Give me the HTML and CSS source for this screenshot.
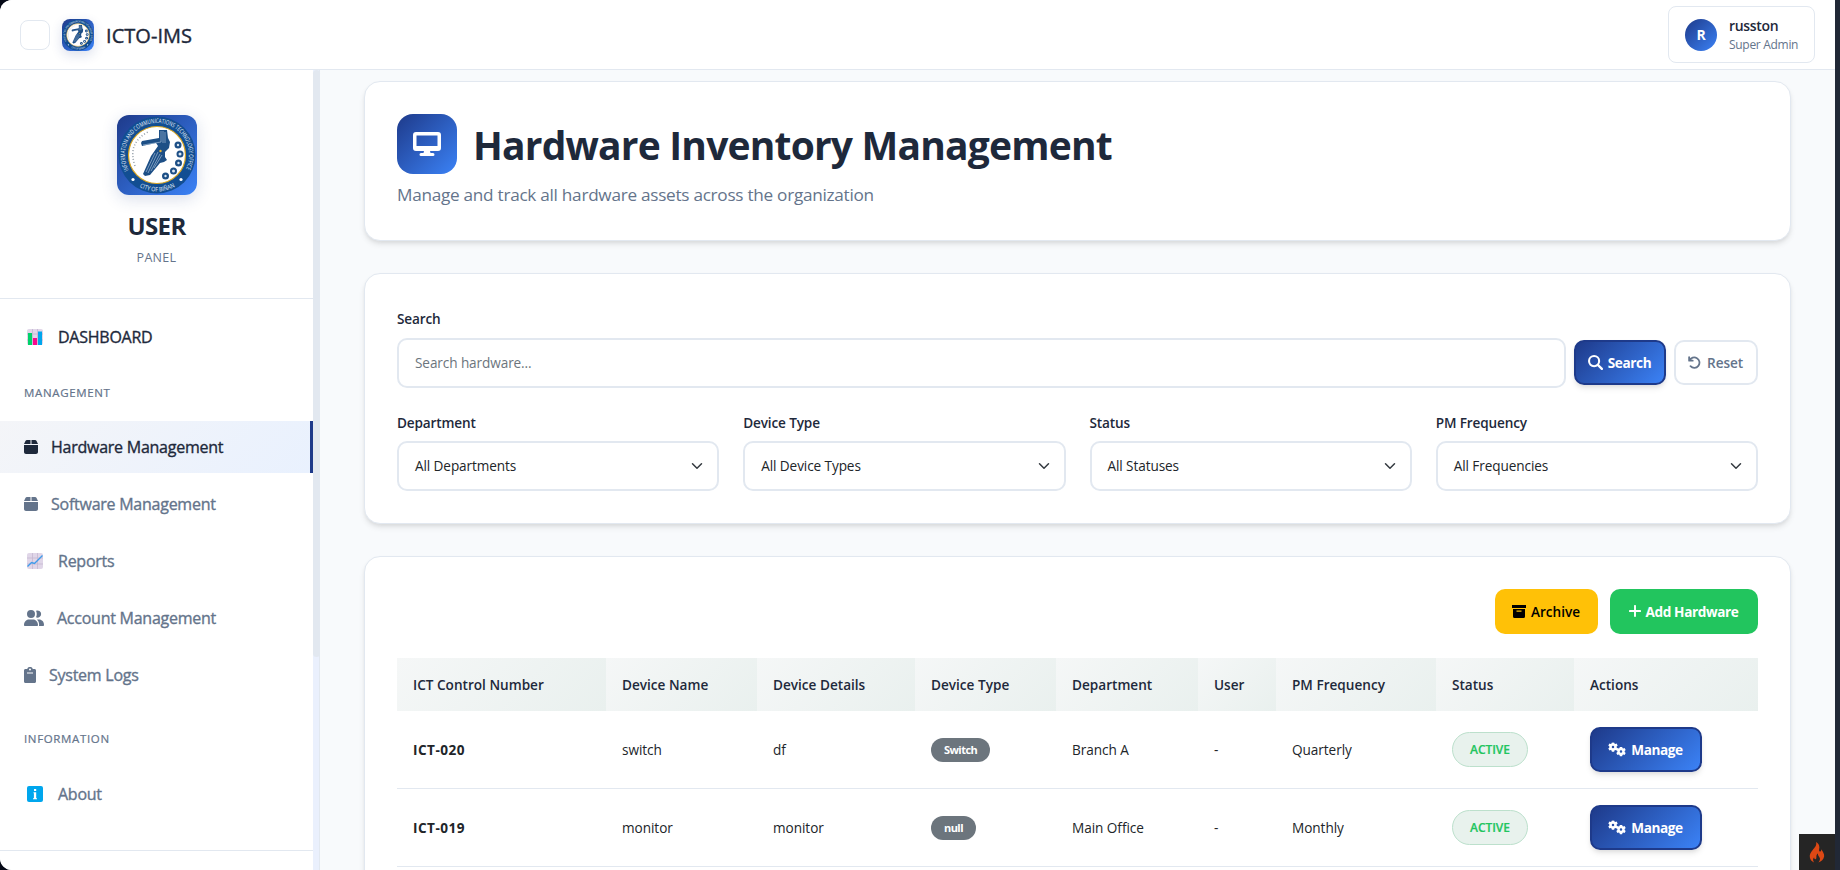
FILE: index.html
```html
<!DOCTYPE html>
<html lang="en">
<head>
<meta charset="utf-8">
<title>Hardware Inventory Management</title>
<link rel="stylesheet" href="styles.css">
</head>
<body>
<svg class="defs" aria-hidden="true">
  <defs>
    <linearGradient id="blue" x1="0" y1="0" x2="1" y2="1"><stop offset="0" stop-color="#1e3a8a"/><stop offset="1" stop-color="#3b82f6"/></linearGradient>
    <path id="arc-top" d="M11.800 55.100A32 32 0 1 1 68.200 55.100"/>
    <path id="arc-bottom" d="M16.300 67.700A36.500 36.500 0 0 0 63.700 67.700"/>
    <symbol id="seal" viewBox="0 0 80 80">
      <rect width="80" height="80" fill="url(#blue)"/>
      <circle cx="40" cy="40" r="38.5" fill="#124e92"/>
      <circle cx="40" cy="40" r="28.5" fill="#fff" stroke="#d9a521" stroke-width="1.200"/>
      <path d="M42 15h8l1 8 2 4-1 6-4 4 0 5 2 3-3 2-4 1-10 12-5 1-2-2 8-18 7-10-2-3-14 3-1-3 1-2 17-3z" fill="#1d4f86"/>
      <path d="M44 16v11M46 16v12M48 17v11M26 30l18-3M38 38L29 57M41 37L31 58M43 39l-9 17M45 40l-8 13" stroke="#b9cde2" stroke-width=".6" fill="none"/>
      <g fill="#1d4f86"><circle cx="61" cy="30" r="3.500"/><circle cx="63" cy="39" r="3.500"/><circle cx="61.500" cy="48" r="3.500"/><circle cx="56.500" cy="56" r="3.500"/><circle cx="48.500" cy="61" r="3.500"/></g>
      <g fill="#dbe7f3"><circle cx="61" cy="30" r="1.200"/><circle cx="63" cy="39" r="1.500"/><circle cx="61.500" cy="48" r="1.200"/><circle cx="56.500" cy="56" r="1.500"/><circle cx="48.500" cy="61" r="1.200"/></g>
      <path d="M18 51Q10 28 31 17" fill="none" stroke="#9aa3ad" stroke-width="1.600" stroke-dasharray="1 2"/>
      <circle cx="43.500" cy="36" r="1.200" fill="#e5b53a"/>
      <circle cx="16" cy="64.500" r="1.600" fill="#fff"/><circle cx="64" cy="64.500" r="1.600" fill="#fff"/>
      <g fill="#e6f0fa" font-family="Open Sans, sans-serif" font-size="6.200">
        <text textLength="130" lengthAdjust="spacingAndGlyphs"><textPath href="#arc-top">INFORMATION AND COMMUNICATIONS TECHNOLOGY OFFICE</textPath></text>
        <text x="7.500" textLength="37" lengthAdjust="spacingAndGlyphs"><textPath href="#arc-bottom">CITY OF BIÑAN</textPath></text>
      </g>
    </symbol>
    <symbol id="box" viewBox="0 0 448 512"><path d="M50.700 58.500L0 160h208V32H93.700c-18.200 0-34.800 10.300-43 26.500zM240 160h208L397.300 58.500c-8.200-16.200-24.800-26.500-43-26.500H240zm208 32H0v224c0 35.300 28.700 64 64 64h320c35.300 0 64-28.700 64-64z"/></symbol>
    <symbol id="gear" viewBox="0 0 20 20"><path fill-rule="evenodd" d="M7.700-.5h4.600l.6 2.700 1.500.8 2.700-.9 2.300 4-2.100 1.900v2l2.100 1.900-2.300 4-2.700-.9-1.500.8-.6 2.700H7.700l-.6-2.700-1.500-.8-2.700.9-2.300-4 2.100-1.900V8L.6 6.100l2.300-4 2.700.9 1.500-.8zM10 6.500a2.500 2.500 0 1 0 0 5 2.500 2.500 0 0 0 0-5z"/></symbol>
    <symbol id="gears" viewBox="0 0 18 15"><use href="#gear" x="0" y=".5" width="10" height="10"/><use href="#gear" x="8" y="5" width="10" height="10"/></symbol>
    <symbol id="chevron" viewBox="0 0 16 16"><path d="M2 5l6 6 6-6" fill="none" stroke="#343a40" stroke-width="2" stroke-linecap="round" stroke-linejoin="round"/></symbol>
  </defs>
</svg>
<div class="app">
  <header class="topbar">
    <div class="brand">
      <button class="menu-toggle" aria-label="Menu"></button>
      <svg class="brand-logo"><use href="#seal"/></svg>
      <span class="brand-name">ICTO-IMS</span>
    </div>
    <div class="profile">
      <span class="avatar">R</span>
      <div><div class="profile-name">russton</div><div class="profile-role">Super Admin</div></div>
    </div>
  </header>
  <div class="body">
    <aside class="sidebar">
      <div class="side-content">
        <div class="side-head">
          <svg class="side-logo"><use href="#seal"/></svg>
          <div class="side-title">USER</div>
          <div class="side-sub">PANEL</div>
        </div>
        <nav class="nav">
          <a class="item emoji dark"><svg viewBox="0 0 16 16"><rect width="16" height="16" rx="2" fill="#e0d6e8"/><path d="M5.500 0v16M10.500 0v16M0 5h16M0 11h16" stroke="#c2b4cf" stroke-width=".8"/><path d="M1 4h4v12H1z" fill="#00d26a"/><path d="M6 9h4v7H6z" fill="#f8098d"/><path d="M11 2.500h4V16h-4z" fill="#00a6ed"/></svg><span>DASHBOARD</span></a>
          <div class="section management">MANAGEMENT</div>
          <a class="item active"><svg class="i14"><use href="#box"/></svg><span>Hardware Management</span></a>
          <a class="item"><svg class="i14"><use href="#box"/></svg><span>Software Management</span></a>
          <a class="item emoji"><svg viewBox="0 0 16 16"><rect width="16" height="16" rx="2" fill="#e0d6e8"/><path d="M5.500 0v16M10.500 0v16M0 5h16M0 11h16" stroke="#c5b9d0" stroke-width=".8"/><path d="M.5 13.500L4.500 9.500 7.500 10.500 15.500 2.500" fill="none" stroke="#3f9bea" stroke-width="1.400"/></svg><span>Reports</span></a>
          <a class="item"><svg class="i20" viewBox="0 0 20 16"><path d="M7 0a4 4 0 1 1 0 8 4 4 0 0 1 0-8zM5 9.500h4c3 0 5 2.500 5 5.500 0 .6-.4 1-1 1H1c-.6 0-1-.4-1-1 0-3 2-5.500 5-5.500z"/><path d="M12 .8a3.600 3.600 0 1 1 0 6.500C13 5.500 13 2.500 12 .8zM13 9.500h2c3 0 5 2.300 5 5.500 0 .6-.4 1-1 1h-4c.4-2.600-.3-4.700-2-6.500z"/></svg><span>Account Management</span></a>
          <a class="item"><svg class="i12" viewBox="0 0 12 16"><path fill-rule="evenodd" d="M1.500 2H3.200a2.900 2.900 0 0 1 5.600 0h1.700c.9 0 1.500.7 1.500 1.500v11c0 .8-.6 1.500-1.500 1.500h-9C.6 16 0 15.300 0 14.500v-11C0 2.700.6 2 1.500 2zM6 1.500a1 1 0 1 0 0 2 1 1 0 0 0 0-2zM3 5.500v1h6v-1z"/></svg><span>System Logs</span></a>
          <div class="section information">INFORMATION</div>
          <a class="item emoji"><svg viewBox="0 0 16 16"><rect width="16" height="16" rx="2" fill="#00a6ed"/><path d="M7 3h2.200v2H7zM6.500 6.300h2.700v5.900H10v1H6v-1h.9V7.300h-.4z" fill="#fff"/></svg><span>About</span></a>
        </nav>
        <div class="side-foot"></div>
      </div>
      <div class="scrollbar"><div class="thumb"></div></div>
    </aside>
    <main class="main">
      <section class="card hero">
        <div class="hero-row">
          <span class="hero-icon"><svg viewBox="0 0 28 24"><path fill-rule="evenodd" fill="#fff" d="M3 0h22a3 3 0 0 1 3 3v13a3 3 0 0 1-3 3h-8l.5 2H20a1.500 1.500 0 0 1 0 3H8a1.500 1.500 0 0 1 0-3h2.500l.5-2H3a3 3 0 0 1-3-3V3a3 3 0 0 1 3-3zm.5 3.500V14h21V3.500z"/></svg></span>
          <h1>Hardware Inventory Management</h1>
        </div>
        <p>Manage and track all hardware assets across the organization</p>
      </section>
      <section class="card filters">
        <label>Search</label>
        <div class="search-row">
          <div class="input"><span>Search hardware...</span></div>
          <button class="btn primary search"><svg viewBox="0 0 16 16"><circle cx="6.500" cy="6.500" r="5.400" fill="none" stroke="#fff" stroke-width="2.200"/><path d="M10.500 10.500l4.300 4.300" stroke="#fff" stroke-width="2.400" stroke-linecap="round"/></svg><span>Search</span></button>
          <button class="btn outline"><svg viewBox="0 0 14 14"><path d="M1.200 1.200v3.900h3.900M1.600 4.900A5.600 5.600 0 1 1 2.700 11" fill="none" stroke="#64748b" stroke-width="1.900" stroke-linecap="round" stroke-linejoin="round"/></svg><span>Reset</span></button>
        </div>
        <div class="selects">
          <div><label>Department</label><div class="input"><span>All Departments</span><svg><use href="#chevron"/></svg></div></div>
          <div><label>Device Type</label><div class="input"><span>All Device Types</span><svg><use href="#chevron"/></svg></div></div>
          <div><label>Status</label><div class="input"><span>All Statuses</span><svg><use href="#chevron"/></svg></div></div>
          <div><label>PM Frequency</label><div class="input"><span>All Frequencies</span><svg><use href="#chevron"/></svg></div></div>
        </div>
      </section>
      <section class="card listing">
        <div class="actions">
          <button class="btn archive"><svg viewBox="0 0 14 13"><path fill-rule="evenodd" d="M0 0h14v3H0zM1 4h12v7.500a1.500 1.500 0 0 1-1.500 1.500h-9A1.500 1.500 0 0 1 1 11.500zM4.500 5.500v1.200h5V5.500z"/></svg><span>Archive</span></button>
          <button class="btn add"><svg viewBox="0 0 12 12"><path d="M6 .9v10.200M.9 6h10.200" stroke="#fff" stroke-width="1.900" stroke-linecap="round"/></svg><span>Add Hardware</span></button>
        </div>
        <table>
          <colgroup><col class="c1"><col class="c2"><col class="c3"><col class="c4"><col class="c5"><col class="c6"><col class="c7"><col class="c8"><col class="c9"></colgroup>
          <thead><tr><th>ICT Control Number</th><th>Device Name</th><th>Device Details</th><th>Device Type</th><th>Department</th><th>User</th><th>PM Frequency</th><th>Status</th><th>Actions</th></tr></thead>
          <tbody>
            <tr><td><b>ICT-020</b></td><td>switch</td><td>df</td><td><span class="tag">Switch</span></td><td>Branch A</td><td>-</td><td>Quarterly</td><td><span class="status">ACTIVE</span></td><td><button class="btn primary manage"><svg><use href="#gears"/></svg><span>Manage</span></button></td></tr>
            <tr><td><b>ICT-019</b></td><td>monitor</td><td>monitor</td><td><span class="tag">null</span></td><td>Main Office</td><td>-</td><td>Monthly</td><td><span class="status">ACTIVE</span></td><td><button class="btn primary manage"><svg><use href="#gears"/></svg><span>Manage</span></button></td></tr>
          </tbody>
        </table>
      </section>
    </main>
  </div>
  <div class="debug"><svg viewBox="0 0 16 22"><path fill="#dd4814" d="M7 0c1 4-1.500 5.500-3.500 8.500C1.500 11 0 13 .5 16c.4 2.500 2 4.500 4.500 5.500-1.500-2-1.500-4 0-5.500 0 1.500.5 2 1.500 2 1.500-.5.500-2.500 1-4 .3-1 1-2 1.500-2-.5 2 1.500 3 2 5 .3 1.500-.3 3-1.500 4.500 3-1 5.500-3 6-6.500.3-3-1.500-5-3-7.500 0 1.500-.5 2.500-1.500 2.500-1.500-.5-.5-3-.5-4.500C10.500 3 9 1 7 0z"/></svg></div>
</div>
</body>
</html>
```
FILE: styles.css
```css
* { box-sizing: border-box; }
body { margin: 0; font-family: "Open Sans", "Noto Sans", sans-serif; color: #212529; height: 870px; overflow: hidden; background: linear-gradient(90deg, #050917 900px, #212836 900px); }
.defs { position: absolute; width: 0; height: 0; }
button { font-family: inherit; }
svg { display: block; flex: none; }
.app { position: relative; width: 1835px; height: 870px; overflow: hidden; border-radius: 12px 0 0 12px; background: #f8fafc; display: flex; flex-direction: column; }
.topbar { flex: none; height: 70px; background: #fff; border-bottom: 1px solid #e2e8f0; display: flex; align-items: center; justify-content: space-between; padding: 0 20px; }
.brand { display: flex; align-items: center; gap: 12px; }
.menu-toggle { width: 30px; height: 30px; border: 1px solid #e2e8f0; border-radius: 8px; background: #fff; padding: 0; }
.brand-logo { width: 32px; height: 32px; border-radius: 8px; box-shadow: 0 4px 12px rgba(30, 58, 138, .16); }
.brand-name { font-size: 20px; font-weight: 500; letter-spacing: .05px; color: #1e293b; -webkit-text-stroke: .4px; padding-top: 1px; }
.profile { width: 147px; height: 57px; border: 1px solid #e2e8f0; border-radius: 8px; display: flex; align-items: center; gap: 12px; padding-left: 16px; white-space: nowrap; margin-top: -1px; }
.avatar { width: 32px; height: 32px; border-radius: 50%; background: linear-gradient(135deg, #1e3a8a, #3b82f6); color: #fff; font-size: 14px; font-weight: 700; display: grid; place-items: center; margin-top: 1px; }
.profile-name { font-size: 14px; line-height: 19px; font-weight: 600; color: #1e293b; letter-spacing: -.3px; padding-top: 2px; }
.profile-role { font-size: 12px; line-height: 20px; color: #64748b; letter-spacing: -.3px; }
.body { flex: 1; display: flex; min-height: 0; }
.sidebar { width: 320px; flex: none; display: flex; background: #fff; }
.side-content { width: 313px; }
.scrollbar { width: 7px; background: #eaf0fd; border-right: 1px solid #e2e8f0; }
.thumb { height: 587px; margin-right: -1px; background: #e2e8f0; border-radius: 4px; }
.side-head { height: 229px; border-bottom: 1px solid #e2e8f0; display: flex; flex-direction: column; align-items: center; padding-top: 45px; }
.side-logo { width: 80px; height: 80px; border-radius: 12px; box-shadow: 0 4px 16px rgba(30, 58, 138, .17); }
.side-title { font-size: 24px; line-height: 30px; margin-top: 16px; font-weight: 700; color: #1e293b; letter-spacing: -.6px; }
.side-sub { font-size: 12.500px; line-height: 16px; margin-top: 9px; color: #64748b; letter-spacing: .3px; }
.nav { padding-top: 12px; }
.item { display: flex; align-items: center; gap: 13px; height: 52px; margin-bottom: 5px; padding-left: 24px; color: #64748b; font-size: 16px; font-weight: 500; letter-spacing: -.25px; -webkit-text-stroke: .35px; white-space: nowrap; }
.item svg { fill: currentColor; }
.item.emoji { padding-left: 27px; gap: 15px; }
.item.emoji svg { width: 16px; height: 16px; }
.item.active { color: #1e293b; background: linear-gradient(135deg, #f4f5f8, #e9f1fe); border-right: 3px solid #1e3a8a; }
.item.dark { color: #1e293b; }
.i14 { width: 14px; height: 16px; }
.i20 { width: 20px; height: 16px; }
.i12 { width: 12px; height: 16px; }
.item svg { -webkit-text-stroke: 0; }
.section { font-size: 11.500px; line-height: 16px; font-weight: 500; color: #64748b; letter-spacing: .65px; -webkit-text-stroke: .2px; padding-left: 24px; }
.management { margin: 22px 0 20px; }
.information { margin: 30px 0 21px; }
.side-foot { border-top: 1px solid #e2e8f0; margin-top: 30px; }
.main { flex: 1; padding: 11px 44px 0; }
.card { background: #fff; border: 1px solid #e2e8f0; border-radius: 16px; padding: 32px; box-shadow: 0 4px 6px -1px rgba(0, 0, 0, .1), 0 2px 4px -1px rgba(0, 0, 0, .06); margin-bottom: 32px; }
.hero { height: 160px; }
.hero-row { display: flex; gap: 16px; align-items: center; height: 60px; }
.hero-icon { width: 60px; height: 60px; border-radius: 16px; background: linear-gradient(135deg, #1e3a8a, #3b82f6); display: grid; place-items: center; }
.hero-icon svg { width: 28px; height: 24px; }
h1 { margin: 0; font-size: 39px; line-height: 48px; font-weight: 700; color: #1e293b; letter-spacing: -.82px; white-space: nowrap; padding-top: 2px; }
.hero p { margin: 7px 0 0; font-size: 17.200px; line-height: 28px; color: #64748b; letter-spacing: -.28px; }
.filters { height: 251px; }
label { display: block; font-size: 13.600px; line-height: 20px; font-weight: 600; color: #1e293b; letter-spacing: -.15px; }
.filters > label { padding-top: 3px; margin-bottom: 9px; }
.search-row { display: flex; align-items: center; gap: 8px; height: 50px; }
.input { flex: 1; height: 50px; border: 2px solid #e2e8f0; border-radius: 10px; background: #fff; padding: 0 14px 1px 16px; display: flex; align-items: center; justify-content: space-between; font-size: 13.600px; color: #212529; letter-spacing: -.1px; }
.search-row .input { color: #6c757d; }
.input svg { width: 12px; height: 12px; }
.selects { display: grid; grid-template-columns: repeat(4, 1fr); gap: 24px; margin-top: 25px; }
.selects label { margin-bottom: 8px; }
.btn { height: 45px; border: 0; border-radius: 10px; display: flex; align-items: center; justify-content: center; gap: 5px; font-size: 13.600px; font-weight: 700; padding: 0 1px 1px 0; letter-spacing: -.4px; white-space: nowrap; color: #fff; }
.search-row .btn { margin-top: -1px; }
.primary { border: 2px solid #1e3a8a; background: linear-gradient(135deg, #1e3a8a, #3b82f6); box-shadow: 0 4px 6px -1px rgba(0, 0, 0, .1), 0 2px 4px -1px rgba(0, 0, 0, .06); }
.search { width: 92px; }
.search svg { width: 15px; height: 15px; }
.outline { width: 84px; border: 2px solid #e2e8f0; background: #fff; color: #64748b; gap: 6px; font-weight: 600; letter-spacing: -.1px; }
.outline svg { width: 13px; height: 13px; }
.listing { height: 400px; }
.actions { display: flex; gap: 12px; justify-content: flex-end; margin-bottom: 24px; }
.archive { width: 103px; background: #ffc107; color: #000; font-weight: 600; letter-spacing: 0; }
.archive svg { width: 14px; height: 13px; }
.add { width: 148px; background: #22c55e; }
.add svg { width: 12px; height: 12px; }
table { width: 1361px; table-layout: fixed; border-collapse: separate; border-spacing: 0; font-size: 13.600px; letter-spacing: -.05px; }
.c1 { width: 209px; } .c2 { width: 151px; } .c3 { width: 158px; } .c4 { width: 141px; } .c5 { width: 142px; } .c6 { width: 78px; } .c7 { width: 160px; } .c8 { width: 138px; } .c9 { width: 184px; }
th, td { padding: 0 16px; text-align: left; white-space: nowrap; }
th { height: 53px; font-weight: 600; color: #1e293b; letter-spacing: 0; background: linear-gradient(135deg, #f5f7f7, #e9f0ee); }
td { height: 78px; border-bottom: 1px solid #e2e8f0; }
b { font-weight: 700; letter-spacing: .45px; }
.tag { display: inline-block; height: 24px; line-height: 24px; border-radius: 12px; padding: 0 13px; background: #6c757d; color: #fff; font-size: 11px; font-weight: 700; letter-spacing: -.55px; vertical-align: middle; }
.status { display: grid; place-items: center; width: 76px; height: 35px; border: 1px solid #bce0cc; border-radius: 18px; background: #e8f2ed; color: #22c55e; font-size: 12px; font-weight: 600; -webkit-text-stroke: .2px; }
.manage { width: 112px; }
.manage svg { width: 18px; height: 15px; fill: #fff; }
.debug { position: absolute; right: 0; bottom: 0; width: 36px; height: 36px; background: #252525; display: grid; place-items: center; }
.debug svg { width: 16px; height: 21px; }
```
